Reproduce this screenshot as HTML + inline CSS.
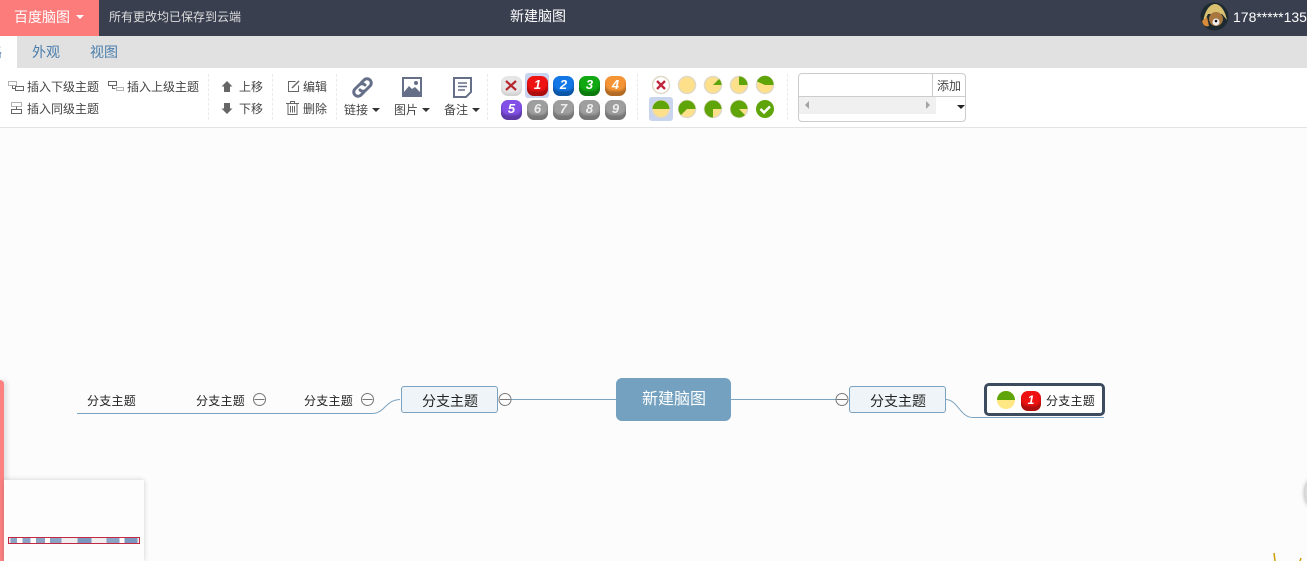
<!DOCTYPE html>
<html lang="zh"><head><meta charset="utf-8"><title>新建脑图</title>
<style>
html,body{margin:0;padding:0;width:1307px;height:561px;overflow:hidden;background:#fcfcfc}
body{font-family:"Liberation Sans","Noto Sans CJK SC",sans-serif;position:relative;color:#333}
.a{position:absolute}
.t{position:absolute;font-size:12px;line-height:16px;white-space:nowrap;color:#444}
.sep{position:absolute;top:74px;height:46px;border-left:1px dashed #eaeaea;width:0}
.caret{display:inline-block;width:0;height:0;border-left:4px solid transparent;border-right:4px solid transparent;border-top:4px solid #333;vertical-align:2px;margin-left:4px}
.p{position:absolute;width:21px;height:20px;border-radius:7px;color:#fff;font:italic bold 13px/18px "Liberation Sans",sans-serif;text-align:center;box-shadow:inset 0 -5px 2px rgba(0,0,0,.28)}
.g{opacity:.95;color:#eee}
svg{position:absolute;overflow:visible}
</style></head><body>
<!-- top bar -->
<div class="a" style="left:0;top:0;width:1307px;height:36px;background:#393f4f"></div>
<div class="a" style="left:0;top:0;width:99px;height:36px;background:#fc7c7c"></div>
<div class="t" style="left:14px;top:7px;font-size:14px;line-height:20px;color:#fff">百度脑图</div>
<div class="a" style="left:76px;top:15px;width:0;height:0;border-left:4px solid transparent;border-right:4px solid transparent;border-top:4px solid #fff"></div>
<div class="t" style="left:109px;top:9px;color:#ddd">所有更改均已保存到云端</div>
<div class="t" style="left:510px;top:6px;font-size:14px;line-height:20px;color:#fff">新建脑图</div>
<svg style="left:1200px;top:2px" width="29" height="29" viewBox="0 0 29 29"><circle cx="14.5" cy="14.5" r="14" fill="#1d2a30"/><path d="M3 22C4 9 10 2 15 2s10 6 12 16l-5-6H8z" fill="#d9c070"/><path d="M2 19c1 5 4 6 7 5l-2-9z" fill="#d98a3a"/><circle cx="16" cy="17" r="7" fill="#a8763f"/><circle cx="16" cy="20" r="3.500" fill="#eee"/><circle cx="16" cy="19" r="1.300" fill="#111"/></svg>
<div class="t" style="left:1233px;top:7px;font-size:14px;line-height:20px;color:#fff">178*****135</div>
<!-- tabs -->
<div class="a" style="left:0;top:36px;width:1307px;height:32px;background:#e1e1e1"></div>
<div class="a" style="left:0;top:36px;width:17px;height:32px;background:#fff;overflow:hidden"><div class="t" style="left:-26px;top:7px;font-size:14px;color:#4a7dab;line-height:18px">思路</div></div>
<div class="t" style="left:32px;top:44px;font-size:14px;color:#4a7dab">外观</div>
<div class="t" style="left:90px;top:44px;font-size:14px;color:#4a7dab">视图</div>
<!-- toolbar -->
<div class="a" style="left:0;top:68px;width:1307px;height:59px;background:#fff;border-bottom:1px solid #e3e3e3"></div>
<svg style="left:8px;top:80px" width="17" height="13" fill="none" stroke="#666"><path d="M.5 1.500h8v4h-8z" stroke-dasharray="1 1"/><path d="M4.500 5.500v3h3"/><path d="M7.500 6.500h8v4h-8z"/></svg>
<div class="t" style="left:27px;top:79px">插入下级主题</div>
<svg style="left:108px;top:80px" width="17" height="13" fill="none" stroke="#666"><path d="M.5 1.500h8v4h-8z"/><path d="M4.500 5.500v3h3"/><path d="M8.500 7.500h7v3h-7z" stroke-dasharray="1 1"/></svg>
<div class="t" style="left:127px;top:79px">插入上级主题</div>
<svg style="left:10px;top:102px" width="13" height="13" fill="none" stroke="#666"><path d="M1.500 .5h10v4h-10z" stroke-dasharray="1 1"/><path d="M6.500 4.500v3"/><path d="M1.500 7.500h10v4h-10z"/></svg>
<div class="t" style="left:27px;top:101px">插入同级主题</div>
<div class="sep" style="left:208px"></div>
<svg style="left:221px;top:81px" width="12" height="11" fill="#666"><path d="M6 0l5.500 5.500H9V11H3V5.500H.5z"/></svg>
<div class="t" style="left:239px;top:79px">上移</div>
<svg style="left:221px;top:103px" width="12" height="11" fill="#666"><path d="M3 0h6v5.500h2.500L6 11 .5 5.500H3z"/></svg>
<div class="t" style="left:239px;top:101px">下移</div>
<div class="sep" style="left:272px"></div>
<svg style="left:287px;top:80px" width="13" height="13" fill="none" stroke="#666"><path d="M8.500 1.500h-7v10h10v-6"/><path d="M5 8l7-7" stroke-width="1.400"/></svg>
<div class="t" style="left:303px;top:79px">编辑</div>
<svg style="left:286px;top:101px" width="13" height="14" fill="none" stroke="#666"><path d="M0 2.500h13M4.500 2.500v-2h4v2M2 2.500v11h9v-11M4.500 5v6.500M6.500 5v6.500M8.500 5v6.500"/></svg>
<div class="t" style="left:303px;top:101px">删除</div>
<div class="sep" style="left:336px"></div>
<svg style="left:351px;top:76px" width="23" height="23" fill="none" stroke="#666f88" stroke-width="3" stroke-linecap="round"><path d="M10 7l3-3a4.200 4.200 0 0 1 6 6l-4 4a4.200 4.200 0 0 1-6 0"/><path d="M13 16l-3 3a4.200 4.200 0 0 1-6-6l4-4a4.200 4.200 0 0 1 6 0"/></svg>
<div class="t" style="left:344px;top:102px">链接<span class="caret"></span></div>
<svg style="left:402px;top:77px" width="20" height="20"><rect x="1" y="1" width="18" height="18" fill="#fff" stroke="#666f88" stroke-width="2"/><path d="M2 15l5-6 3 3 3-2 5 5v4H2z" fill="#666f88"/><circle cx="14" cy="6" r="2" fill="#666f88"/></svg>
<div class="t" style="left:394px;top:102px">图片<span class="caret"></span></div>
<svg style="left:453px;top:77px" width="19" height="21" fill="none" stroke="#666f88"><path d="M1 1h17v14l-5 5H1z" stroke-width="2"/><path d="M5 6h9M5 9.500h9M5 13h7" stroke-width="1.500"/></svg>
<div class="t" style="left:444px;top:102px">备注<span class="caret"></span></div>
<div class="sep" style="left:487px"></div>
<!-- priorities -->
<div class="p" style="left:501px;top:76px;background:#e6e6e6;box-shadow:inset 0 -3px 2px #d2d2d2"></div>
<svg style="left:506px;top:81px" width="10" height="9" stroke="#b5272f" stroke-width="2.200"><path d="M0 0l10 9M10 0L0 9"/></svg>
<div class="a" style="left:525px;top:73px;width:24px;height:25px;background:#c9d4ee;border-radius:3px"></div>
<div class="p" style="left:527px;top:76px;background:#ee1212">1</div>
<div class="p" style="left:553px;top:76px;background:#1377e6">2</div>
<div class="p" style="left:579px;top:76px;background:#11a814">3</div>
<div class="p" style="left:605px;top:76px;background:#f59435">4</div>
<div class="p" style="left:501px;top:100px;background:#8250e6">5</div>
<div class="p g" style="left:527px;top:100px;background:#999">6</div>
<div class="p g" style="left:553px;top:100px;background:#999">7</div>
<div class="p g" style="left:579px;top:100px;background:#999">8</div>
<div class="p g" style="left:605px;top:100px;background:#999">9</div>
<div class="sep" style="left:637px"></div>
<!-- progress -->
<div class="a" style="left:649px;top:97px;width:24px;height:24px;background:#c9d4ee;border-radius:3px"></div>
<svg style="left:650px;top:74px" width="126" height="48" viewBox="0 0 126 48">
<g stroke="#e0d9c6" stroke-width="1.500">
<circle cx="11" cy="11" r="8.500" fill="#fff"/><circle cx="37" cy="11" r="8.500" fill="#ffe08a"/><circle cx="63" cy="11" r="8.500" fill="#ffe08a"/><circle cx="89" cy="11" r="8.500" fill="#ffe08a"/><circle cx="115" cy="11" r="8.500" fill="#ffe08a"/>
<circle cx="11" cy="35" r="8.500" fill="#ffe08a"/><circle cx="37" cy="35" r="8.500" fill="#ffe08a"/><circle cx="63" cy="35" r="8.500" fill="#ffe08a"/><circle cx="89" cy="35" r="8.500" fill="#ffe08a"/></g>
<path d="M7 7l8 8M15 7l-8 8" stroke="#c0273a" stroke-width="2.300"/>
<g fill="#5fa50a">
<path d="M63 11L69 5A8.500 8.500 0 0 1 71.500 11z"/>
<path d="M89 11V2.500A8.500 8.500 0 0 1 97.500 11z"/>
<path d="M115 11L107 7.500A8.500 8.500 0 0 1 123.500 11z"/>
<path d="M2.500 35A8.500 8.500 0 0 1 19.500 35z"/>
<path d="M37 35L31 41A8.500 8.500 0 1 1 45.500 35z"/>
<path d="M63 35V43.500A8.500 8.500 0 1 1 71.500 35z"/>
<path d="M89 35L95 41A8.500 8.500 0 1 1 97.500 35z"/>
<circle cx="115" cy="35" r="9"/></g>
<path d="M110.500 35l3.500 3.500 6-6" fill="none" stroke="#fff" stroke-width="2.500"/>
</svg>
<div class="sep" style="left:787px"></div>
<!-- template box -->
<div class="a" style="left:798px;top:73px;width:166px;height:47px;border:1px solid #ccc;border-radius:4px;background:#fff"></div>
<div class="a" style="left:798px;top:96px;width:168px;height:1px;background:#ccc"></div>
<div class="a" style="left:932px;top:74px;width:1px;height:22px;background:#ccc"></div>
<div class="t" style="left:937px;top:78px;color:#444">添加</div>
<div class="a" style="left:799px;top:97px;width:137px;height:17px;background:#f0f0f0"></div>
<div class="a" style="left:805px;top:101px;width:0;height:0;border-top:4px solid transparent;border-bottom:4px solid transparent;border-right:4px solid #a3a3a3"></div>
<div class="a" style="left:926px;top:101px;width:0;height:0;border-top:4px solid transparent;border-bottom:4px solid transparent;border-left:4px solid #a3a3a3"></div>
<div class="a" style="left:957px;top:105px;width:0;height:0;border-left:4px solid transparent;border-right:4px solid transparent;border-top:4px solid #222"></div>
<!-- mind map lines -->
<svg style="left:0;top:0" width="1307" height="561" fill="none" stroke="#7ba3c0">
<path d="M77 413.500H372C385 413.500 385 400 400 399.500"/>
<path d="M510 399.500H616M731 399.500H837"/>
<path d="M946 399.500C958 400 960 417.500 973 417.500H1104"/>
<g stroke="#777"><circle cx="259.500" cy="399.500" r="6"/><path d="M254.500 399.500h10"/><circle cx="367.500" cy="399.500" r="6"/><path d="M362.500 399.500h10"/><circle cx="505" cy="399.500" r="6"/><path d="M500 399.500h10"/><circle cx="842" cy="399.500" r="6"/><path d="M837 399.500h10"/></g>
</svg>
<div class="t" style="left:87px;top:393px;color:#222;letter-spacing:.25px">分支主题</div>
<div class="t" style="left:196px;top:393px;color:#222;letter-spacing:.25px">分支主题</div>
<div class="t" style="left:304px;top:393px;color:#222;letter-spacing:.25px">分支主题</div>
<div class="a" style="left:401px;top:386px;width:95px;height:25px;background:#eef4f8;border:1px solid #7ba3c0;border-radius:3px"></div>
<div class="t" style="left:422px;top:392px;font-size:14px;line-height:18px;color:#222">分支主题</div>
<div class="a" style="left:616px;top:378px;width:115px;height:43px;background:#73a1bf;border-radius:6px"></div>
<div class="t" style="left:642px;top:390px;font-size:16px;line-height:20px;color:#fff">新建脑图</div>
<div class="a" style="left:849px;top:386px;width:95px;height:25px;background:#eef4f8;border:1px solid #7ba3c0;border-radius:3px"></div>
<div class="t" style="left:870px;top:392px;font-size:14px;line-height:18px;color:#222">分支主题</div>
<div class="a" style="left:984px;top:383px;width:115px;height:27px;border:3px solid #3c4b5e;border-radius:5px;background:#fff"></div>
<svg style="left:997px;top:391px" width="18" height="18"><circle cx="9" cy="9" r="9" fill="#ffe783"/><path d="M0 9a9 9 0 0 1 18 0z" fill="#5fa50a"/></svg>
<div class="p" style="left:1021px;top:391px;width:20px;background:#ee1212;font-size:12px">1</div>
<div class="t" style="left:1046px;top:393px;color:#222;letter-spacing:.25px">分支主题</div>
<!-- left widgets -->
<div class="a" style="left:0;top:380px;width:4px;height:181px;background:#fc8282;border-radius:0 4px 0 0;box-shadow:2px 0 6px rgba(0,0,0,.18)"></div>
<div class="a" style="left:4px;top:480px;width:140px;height:81px;background:#fdfdfd;box-shadow:0 0 5px rgba(0,0,0,.18)"></div>
<div class="a" style="left:8px;top:537px;width:130px;height:5px;border:1px solid #c22a44;background-clip:padding-box;background-color:#eee;background-image:linear-gradient(90deg,#eee 0 1%,#8aa2c4 1% 6%,#fff 6% 10.500%,#8aa2c4 10.500% 16.700%,#fff 16.700% 20.800%,#8aa2c4 20.800% 27.700%,#fff 27.700% 31.500%,#8aa2c4 31.500% 40.500%,#eee 40.500% 52.800%,#7c97bd 52.800% 63.600%,#eee 63.600% 75%,#8aa2c4 75% 85%,#fff 85% 89%,#7c97bd 89% 98.700%,#eee 98.700%)"></div>
<!-- right edge -->
<div class="a" style="left:1305px;top:480px;width:14px;height:26px;border-radius:50%;background:#ddd;box-shadow:0 0 5px rgba(0,0,0,.4)"></div>
<svg style="left:1270px;top:552px" width="30" height="9" fill="none" stroke="#c9a000" stroke-width="1.500"><path d="M4 1l1 8M30 9l1-3"/></svg>
</body></html>
